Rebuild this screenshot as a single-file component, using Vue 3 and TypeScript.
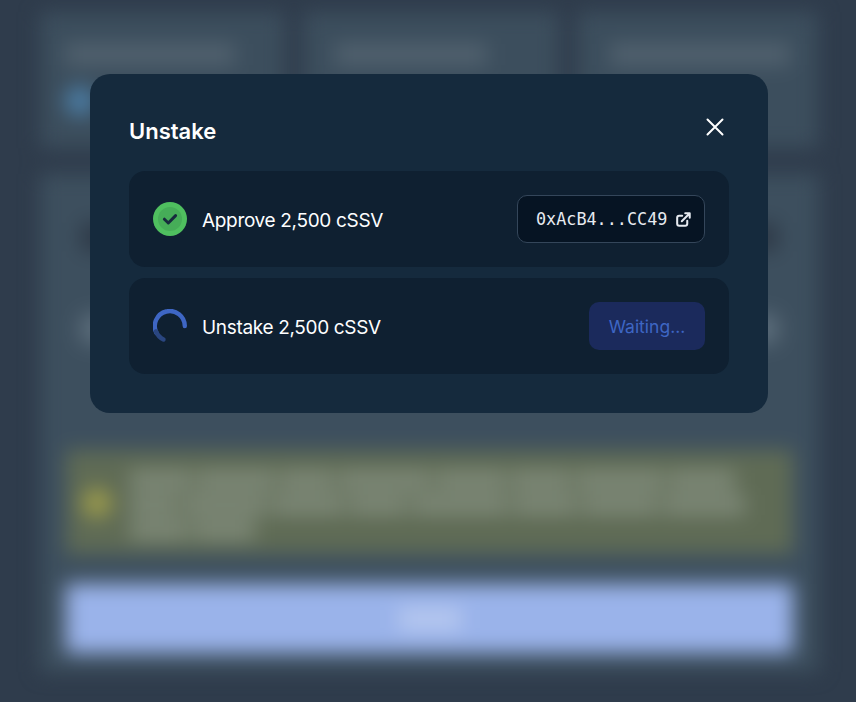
<script setup lang="ts">
const steps = [{ label: 'Approve 2,500 cSSV' }, { label: 'Unstake 2,500 cSSV' }]
const warnLines = [
  [62, 78, 54, 92, 70, 60, 88, 66],
  [48, 84, 72, 58, 96, 64, 76, 82],
  [58, 62],
]
</script>

<template>
  <div class="page">
    <div class="backdrop">
      <div class="stats">
        <div class="stat stat-a">
          <div class="stat-line"></div>
          <span class="dot"></span>
        </div>
        <div class="stat stat-b"><div class="stat-line"></div></div>
        <div class="stat stat-c"><div class="stat-line"></div></div>
      </div>
      <div class="panel">
        <div class="panel-lines">
          <div class="line-a"></div>
          <div class="line-b"></div>
        </div>
        <div class="warn">
          <span class="warn-icon"></span>
          <div class="warn-text">
            <div v-for="(line, i) in warnLines" :key="i" class="warn-line">
              <span v-for="(w, j) in line" :key="j" class="word" :style="{ width: w + 'px' }"></span>
            </div>
          </div>
        </div>
        <div class="cta"><span class="cta-text"></span></div>
      </div>
    </div>

    <section class="modal">
      <header class="modal-head">
        <h2>Unstake</h2>
        <svg class="close" width="24" height="24" viewBox="0 0 24 24" fill="none">
          <path d="M4.5 4.5 19.5 19.5M19.5 4.5 4.5 19.5" stroke="#fff" stroke-width="2" stroke-linecap="round" />
        </svg>
      </header>
      <div class="steps">
        <div class="step">
          <div class="step-main">
            <svg width="34" height="34" viewBox="0 0 34 34">
              <circle cx="17" cy="17" r="17" fill="#4fbf5f" />
              <circle cx="17" cy="17" r="12" fill="#46ad58" />
              <path d="M11.4 17.2 15.3 21 22.6 13.6" fill="none" stroke="#172a3d" stroke-width="3" stroke-linecap="round" stroke-linejoin="round" />
            </svg>
            <span class="label">{{ steps[0].label }}</span>
          </div>
          <button class="hash">
            <span>0xAcB4...CC49</span>
            <svg width="15" height="15" viewBox="0 0 14 14" fill="none" stroke="#e6eaf0" stroke-width="1.9" stroke-linecap="round" stroke-linejoin="round">
              <path d="M5.8 3.4H3C1.9 3.4 1.1 4.2 1.1 5.3v5.6c0 1.1.8 1.9 1.9 1.9h5.6c1.1 0 1.9-.8 1.9-1.9V8.2" />
              <path d="M5.4 8.6 12.6 1.4M8.6 1.2h4.2v4.2" />
            </svg>
          </button>
        </div>
        <div class="step">
          <div class="step-main">
            <svg width="34" height="34" viewBox="0 0 34 34" fill="none" stroke-width="4.4" stroke-linecap="round">
              <path d="M31.8 17A15 15 0 1 0 3.5 24" stroke="#3e66c4" />
              <path d="M3 22.4A15 15 0 0 0 10.5 30.5" stroke="#2a4680" />
            </svg>
            <span class="label">{{ steps[1].label }}</span>
          </div>
          <button class="waiting">Waiting...</button>
        </div>
      </div>
    </section>
  </div>
</template>

<style>
html, body { margin: 0; background: #2f3c4c; }
</style>

<style scoped>
.page {
  position: relative;
  width: 856px;
  height: 702px;
  overflow: hidden;
  background: #2f3c4c;
  font-family: Inter, "Liberation Sans", sans-serif;
}
.backdrop {
  box-sizing: border-box;
  height: 702px;
  padding: 12px 37px 0 40px;
  filter: blur(10px);
}
.stats {
  display: grid;
  grid-template-columns: 245px 256px 241px;
  column-gap: 18px;
}
.stat {
  box-sizing: border-box;
  height: 136px;
  padding-top: 32px;
  background: #3c4e5d;
}
.stat-a { padding-left: 25px; }
.stat-b { padding-left: 32px; }
.stat-c { padding-left: 33px; }
.stat-line {
  height: 21px;
  background: #52626f;
}
.stat-a .stat-line { width: 170px; }
.stat-b .stat-line { width: 152px; }
.stat-c .stat-line { width: 180px; }
.dot {
  display: block;
  width: 30px;
  height: 30px;
  margin-top: 21px;
  border-radius: 50%;
  background: #4b7da5;
}
.panel {
  margin-top: 26px;
  box-sizing: border-box;
  height: 498px;
  padding: 0 26px;
  background: #3d4f5e;
}
.panel-lines {
  height: 276px;
  padding-top: 48px;
  box-sizing: border-box;
}
.line-a, .line-b {
  height: 30px;
  margin: 0 14px;
  border-radius: 6px;
}
.line-a {
  background: #2f3b49;
}
.line-b {
  margin-top: 62px;
  background: #5b6c7a;
}
.warn {
  height: 104px;
  display: flex;
  gap: 18px;
  padding: 20px 28px 0 16px;
  box-sizing: border-box;
  background: #5f6b55;
}
.warn-icon {
  width: 30px;
  height: 30px;
  margin-top: 18px;
  border-radius: 50%;
  background: #9a9a4c;
  flex: none;
}
.warn-text {
  flex: 1;
  display: flex;
  flex-direction: column;
  gap: 3px;
}
.warn-line {
  display: flex;
  gap: 5px;
  height: 22px;
}
.word {
  height: 20px;
  background: #7d8877;
}
.cta {
  margin-top: 30px;
  height: 69px;
  display: flex;
  align-items: center;
  justify-content: center;
  background: #9ab3ea;
}
.cta-text {
  width: 62px;
  height: 22px;
  background: #b6c8ef;
}
.modal {
  position: absolute;
  left: 90px;
  top: 74px;
  box-sizing: border-box;
  width: 678px;
  height: 339px;
  padding: 39px;
  border-radius: 20px;
  background: #152a3d;
}
.modal-head {
  display: flex;
  justify-content: space-between;
  align-items: flex-start;
  height: 58px;
}
h2 {
  margin: 4px 0 0;
  font-size: 22px;
  line-height: 28px;
  font-weight: 600;
  color: #fff;
}
.close {
  margin: 2px 2px 0 0;
}
.steps {
  display: flex;
  flex-direction: column;
  gap: 11px;
}
.step {
  box-sizing: border-box;
  height: 96px;
  padding: 0 24px;
  border-radius: 16px;
  background: #0f2031;
  display: flex;
  align-items: center;
  justify-content: space-between;
}
.step-main {
  display: flex;
  align-items: center;
  gap: 15px;
}
.label {
  padding-top: 2px;
  font-size: 19px;
  letter-spacing: -0.33px;
  font-weight: 400;
  color: #fdfeff;
}
.hash {
  box-sizing: border-box;
  width: 188px;
  height: 48px;
  padding: 0 13px 0 18px;
  display: flex;
  align-items: center;
  justify-content: space-between;
  border: 1px solid #34465a;
  border-radius: 10px;
  background: #061423;
  color: #e6eaf0;
  font-family: "DejaVu Sans Mono", monospace;
  font-size: 16.8px;
}
.waiting {
  box-sizing: border-box;
  width: 116px;
  height: 48px;
  padding: 0;
  border: 0;
  border-radius: 10px;
  background: #1b2a5c;
  color: #3e66c4;
  font-family: Inter, sans-serif;
  font-size: 17.5px;
  font-weight: 400;
}
</style>
